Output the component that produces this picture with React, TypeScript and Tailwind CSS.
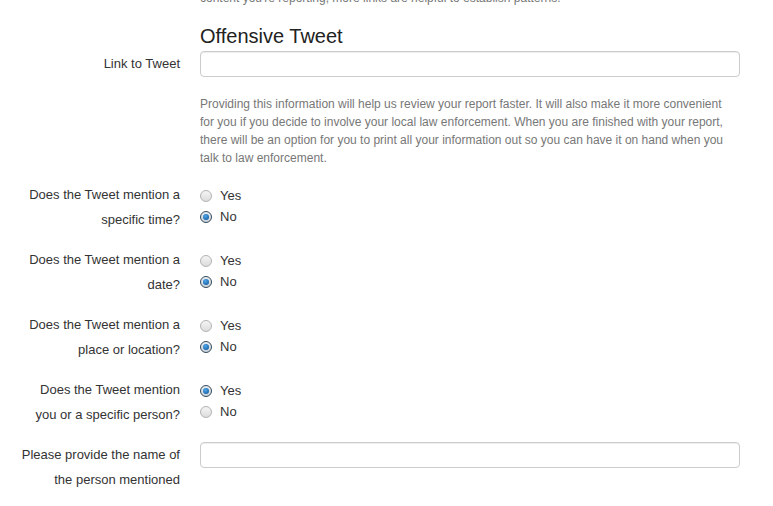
import type { ReactNode } from "react";

const font = { fontFamily: '"Liberation Sans", Arial, sans-serif' };

function Radio({ checked, label }: { checked?: boolean; label: string }) {
  return (
    <div className="flex h-[21px] items-center">
      {checked ? (
        <span className="flex h-[12px] w-[12px] items-center justify-center rounded-full border border-[#34495b] bg-[linear-gradient(#e8eef2,#c9d3da)]">
          <span className="h-[6px] w-[6px] rounded-full bg-[radial-gradient(circle_at_40%_35%,#4ea6ec,#0c4f8f)]" />
        </span>
      ) : (
        <span className="h-[12px] w-[12px] rounded-full border border-[#b3b3b3] bg-[linear-gradient(#f5f5f5,#dcdcdc)]" />
      )}
      <span className="ml-[8px] text-[13px] text-[#333]">{label}</span>
    </div>
  );
}

function Row({ label, children, className = "" }: { label: ReactNode; children: ReactNode; className?: string }) {
  return (
    <div className={`flex ${className}`}>
      <div className="w-[180px] shrink-0 text-right text-[13px] leading-[25px] text-[#333]">{label}</div>
      <div className="ml-[20px] w-[540px]">{children}</div>
    </div>
  );
}

function TextInput() {
  return (
    <div className="h-[26px] w-[540px] rounded-[4px] border border-[#cccccc] bg-white shadow-[inset_0_1px_1px_rgba(0,0,0,0.075)]" />
  );
}

export default function App() {
  const questions = [
    { label: ["Does the Tweet mention a", "specific time?"], yes: false },
    { label: ["Does the Tweet mention a", "date?"], yes: false },
    { label: ["Does the Tweet mention a", "place or location?"], yes: false },
    { label: ["Does the Tweet mention", "you or a specific person?"], yes: true },
  ];

  return (
    <div className="h-[506px] w-[773px] overflow-hidden bg-white" style={font}>
      <div className="mt-[-11px] flex flex-col">
        <Row label="">
          <p className="text-[12px] leading-[18px] text-[#777]">
            content you're reporting, more links are helpful to establish patterns.
          </p>
        </Row>

        <Row label="" className="mt-[17px]">
          <h2 className="text-[20px] leading-[24px] text-[#222]">Offensive Tweet</h2>
        </Row>

        <Row label="Link to Tweet" className="mt-[3px]">
          <TextInput />
          <p className="mt-[18px] whitespace-nowrap text-[12px] leading-[18px] text-[#777]">
            Providing this information will help us review your report faster. It will also make it more convenient
            <br />
            for you if you decide to involve your local law enforcement. When you are finished with your report,
            <br />
            there will be an option for you to print all your information out so you can have it on hand when you
            <br />
            talk to law enforcement.
          </p>
        </Row>

        {questions.map((q, i) => (
          <Row
            key={i}
            className="mt-[15px]"
            label={
              <>
                <div>{q.label[0]}</div>
                <div>{q.label[1]}</div>
              </>
            }
          >
            <div className="pt-[3px]">
              <Radio label="Yes" checked={q.yes} />
              <Radio label="No" checked={!q.yes} />
            </div>
          </Row>
        ))}

        <Row
          className="mt-[15px]"
          label={
            <>
              <div>Please provide the name of</div>
              <div>the person mentioned</div>
            </>
          }
        >
          <TextInput />
        </Row>
      </div>
    </div>
  );
}
